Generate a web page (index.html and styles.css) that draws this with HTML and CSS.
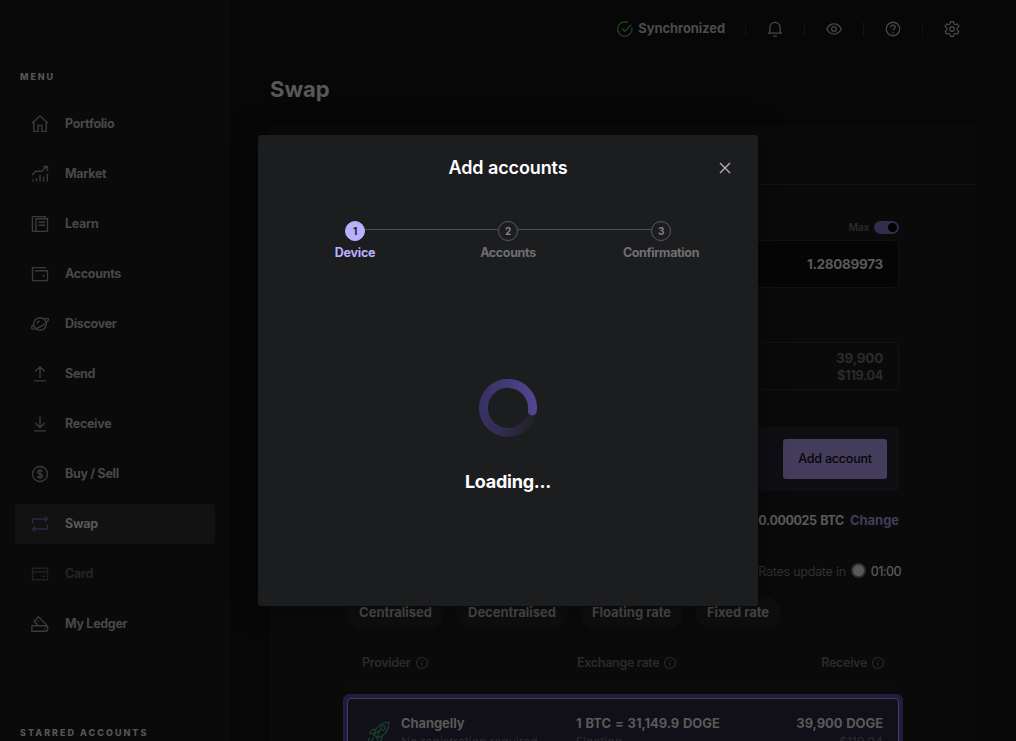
FILE: index.html
```html
<!DOCTYPE html>
<html lang="en">
<head>
<meta charset="utf-8">
<title>Swap – Add accounts</title>
<link rel="stylesheet" href="styles.css">
</head>
<body>
<div class="app">
  <aside class="sidebar">
    <h2 class="side-title">MENU</h2>
    <nav class="menu">
      <a class="item"><svg class="ico" viewBox="0 0 20 20"><path d="M2 9.3 10 2l8 7.3M3.8 8v9.4h4.3v-6h3.8v6h4.3V8"/></svg><span>Portfolio</span></a>
      <a class="item"><svg class="ico" viewBox="0 0 20 20"><path d="M2 11 5.800 7.200h5.600L17 2.500M13 2.500h4.500V7M2.800 15.500v2M6.500 14v3.500M10 11v6.500M13.600 12.600v4.900M17.300 10v7.500"/></svg><span>Market</span></a>
      <a class="item"><svg class="ico" viewBox="0 0 20 20"><path d="M5.500 17.400H3.600a1.200 1.200 0 0 1-1.200-1.200V2.600h12.800v2M6 17.400V4.800h11.500v11.400a1.200 1.200 0 0 1-1.200 1.200H5.500M8.500 8.300h6.500M8.500 11.300h6.500"/></svg><span>Learn</span></a>
      <a class="item"><svg class="ico" viewBox="0 0 20 20"><path d="M16 3.600H2.500v13h15V6.800H5M13.600 10.700v2M12.600 11.700h2"/></svg><span>Accounts</span></a>
      <a class="item"><svg class="ico" viewBox="0 0 20 20"><circle cx="10" cy="10" r="6.300"/><path d="M14.400 4.900c2-.7 3.500-.8 4 0 .8 1.400-2.400 4.600-7 7.200s-8.900 3.700-9.700 2.300c-.5-.8.300-2.200 1.900-3.800M7 9.500c.3-1.300 1.200-2.200 2.500-2.500"/></svg><span>Discover</span></a>
      <a class="item"><svg class="ico" viewBox="0 0 20 20"><path d="M10 14V3M5.300 7.600 10 3l4.700 4.600M4 16.900h12"/></svg><span>Send</span></a>
      <a class="item"><svg class="ico" viewBox="0 0 20 20"><path d="M10 2.500v11M5.300 8.900 10 13.500l4.700-4.600M4 16.900h12"/></svg><span>Receive</span></a>
      <a class="item"><svg class="ico" viewBox="0 0 20 20"><circle cx="10" cy="10" r="7.500"/><path d="M12.500 8c-.2-1-1.100-1.600-2.500-1.600S7.600 7 7.600 8.100c0 2.500 4.900 1.200 4.900 3.800 0 1.100-1 1.700-2.500 1.700s-2.500-.7-2.600-1.700M10 5v10"/></svg><span>Buy / Sell</span></a>
      <a class="item active"><svg class="ico" viewBox="0 0 20 20"><path d="M2.600 9.800V5h14.600M14.600 2.300 17.400 5l-2.800 2.700M17.400 10.200V15H2.800M5.400 12.300 2.600 15l2.800 2.700"/></svg><span>Swap</span></a>
      <a class="item off"><svg class="ico" viewBox="0 0 20 20"><path d="M2.500 4.300h15v11.500h-15zM2.500 8h15M12 12.300h3"/></svg><span>Card</span></a>
      <a class="item"><svg class="ico" viewBox="0 0 20 20"><path d="M1.900 11.700h13.200a2.800 2.800 0 0 1 0 5.600H1.900zM8.200 11.700 4.200 7.200l4.300-4.500 9 9.400M8.300 6.600v.9M14.800 14.100v.9"/></svg><span>My Ledger</span></a>
    </nav>
    <h2 class="side-title starred">STARRED ACCOUNTS</h2>
  </aside>

  <main class="main">
    <header class="topbar">
      <div class="sync"><svg class="ico" viewBox="0 0 20 20"><path d="M17.600 8.500A8 8 0 1 1 13.300 2.900M6.700 9.400l3.200 3 7-7.300"/></svg><span>Synchronized</span></div>
      <span class="cell"><svg class="ico" viewBox="0 0 20 20"><path d="M2 14.500h16M4.300 14.500V8.300a5.700 5.700 0 0 1 11.400 0v6.200M8 17.900h4"/></svg></span>
      <span class="cell"><svg class="ico" viewBox="0 0 20 20"><path d="M1.800 10C3.700 6.400 6.600 4.300 10 4.300s6.300 2.100 8.200 5.700c-1.900 3.600-4.800 5.700-8.200 5.700S3.700 13.600 1.800 10z"/><circle cx="10" cy="10" r="2.600"/></svg></span>
      <span class="cell"><svg class="ico" viewBox="0 0 20 20"><circle cx="10" cy="10" r="7.500"/><path d="M7.500 8c.1-1.400 1.100-2.200 2.500-2.200s2.500.8 2.500 2.100c0 1.700-2.500 1.800-2.500 3.800M10 13.300v1.600"/></svg></span>
      <span class="cell"><svg class="ico" viewBox="0 0 20 20"><path d="M8.400 1.900h3.200l.5 2.400 1.600.9 2.300-.8 1.600 2.800-1.800 1.700v2.200l1.800 1.700-1.600 2.800-2.300-.8-1.600.9-.5 2.400H8.400l-.5-2.400-1.600-.9-2.300.8-1.600-2.800 1.800-1.700V8.900L2.400 7.200 4 4.400l2.300.8 1.600-.9z"/><circle cx="10" cy="10" r="2.500"/></svg></span>
    </header>

    <h1 class="page-title">Swap</h1>

    <section class="card">
      <div class="card-head"></div>
      <div class="form">
        <div class="max-row">Max<span class="toggle"></span></div>
        <div class="field from">1.28089973</div>
        <div class="field to"><span>39,900</span><small>$119.04</small></div>
        <div class="banner"><button class="add">Add account</button></div>
        <div class="fee">0.000025 BTC<a class="change">Change</a></div>
        <div class="rates"><span>Rates update in</span><i class="timer"></i><b>01:00</b></div>
        <div class="pills">
          <span class="pill p1">Centralised</span><span class="pill p2">Decentralised</span><span class="pill p3">Floating rate</span><span class="pill p4">Fixed rate</span>
        </div>
        <div class="grid thead">
          <span>Provider<svg class="info" viewBox="0 0 14 14"><circle cx="7" cy="7" r="5.500"/><path d="M7 6.200v3.600M7 3.900v1.200"/></svg></span>
          <span>Exchange rate<svg class="info" viewBox="0 0 14 14"><circle cx="7" cy="7" r="5.500"/><path d="M7 6.200v3.600M7 3.900v1.200"/></svg></span>
          <span class="end">Receive<svg class="info" viewBox="0 0 14 14"><circle cx="7" cy="7" r="5.500"/><path d="M7 6.200v3.600M7 3.900v1.200"/></svg></span>
        </div>
        <div class="quote">
          <div class="grid quote-in">
            <div class="provider">
              <svg class="rocket" viewBox="0 0 24 24"><path d="M22 2c-6 .3-10.500 2.500-13.500 8l-2 4.500 4 3.500 4.500-2.200C20.500 12.500 22 8 22 2zM9 9.500c-3-.5-5 .5-6.500 4l4 .5M15 16c.5 3-.5 5-4 7l-.5-5M3 18c-1.500 1-2 3-2 5M7 17l-4 6M7 14l6-4-3 7"/><circle cx="16" cy="7.800" r="2.300"/></svg>
              <div><strong>Changelly</strong><em>No registration required</em></div>
            </div>
            <div><strong>1 BTC = 31,149.9 DOGE</strong><em>Floating</em></div>
            <div class="end"><strong>39,900 DOGE</strong><em>$119.04</em></div>
          </div>
        </div>
      </div>
    </section>
  </main>
</div>

<div class="modal" role="dialog">
  <header class="modal-head"><h3>Add accounts</h3>
    <svg class="close" viewBox="0 0 12 12"><path d="M1 1l10 10M11 1 1 11"/></svg>
  </header>
  <ol class="steps">
    <li class="step on"><span class="num">1</span><span class="label">Device</span></li>
    <li class="step"><span class="num">2</span><span class="label">Accounts</span></li>
    <li class="step"><span class="num">3</span><span class="label">Confirmation</span></li>
  </ol>
  <div class="loading">
    <svg class="spinner" viewBox="0 0 58 58">
      <defs>
        <linearGradient id="top" gradientUnits="userSpaceOnUse" x1="4" y1="0" x2="54" y2="0"><stop offset="0" stop-color="#383163"/><stop offset="1" stop-color="#50458f"/></linearGradient>
        <linearGradient id="low" gradientUnits="userSpaceOnUse" x1="4" y1="29" x2="52" y2="42"><stop offset="0" stop-color="#383163"/><stop offset=".5" stop-color="#312c50"/><stop offset="1" stop-color="#222229"/></linearGradient>
      </defs>
      <path stroke="url(#low)" d="M4.500 29A24.500 24.500 0 0 0 50.300 41"/>
      <path stroke="url(#top)" d="M4.500 29A24.500 24.500 0 1 1 53.300 32"/>
    </svg>
    <p>Loading...</p>
  </div>
</div>
</body>
</html>
```
FILE: styles.css
```css
* { box-sizing: border-box; }
body {
  margin: 0;
  width: 1016px;
  height: 741px;
  overflow: hidden;
  position: relative;
  background: #070707;
  color: #595959;
  font: 600 13px/16px Inter, "Liberation Sans", sans-serif;
  white-space: nowrap;
}
h1, h2, h3, p, ol { margin: 0; padding: 0; }
svg { fill: none; stroke: currentColor; flex: none; }

.app { display: flex; height: 741px; overflow: hidden; }

/* Sidebar */
.sidebar { width: 230px; flex: none; background: #0a0a0a; padding: 71px 15px 0; }
.side-title {
  padding-left: 5px;
  font-size: 9px;
  line-height: 12px;
  font-weight: 800;
  letter-spacing: 1.9px;
  color: #555;
}
.starred { margin-top: 83px; letter-spacing: 2px; }
.menu { display: grid; gap: 10px; margin-top: 21px; }
.item {
  display: flex;
  align-items: center;
  gap: 15px;
  height: 40px;
  padding-left: 15px;
  border-radius: 4px;
  color: #484848;
  font-size: 12.500px;
  font-weight: 700;
  letter-spacing: -.3px;
}
.item span { padding-bottom: 1px; }
.ico { width: 20px; height: 20px; stroke-width: 1.4; }
.item .ico { color: #3a3a3a; }
.item.active { background: #121212; color: #595959; }
.item.active .ico { color: #2d2843; }
.item.off { color: #252525; }
.item.off .ico { color: #202020; }

/* Main column */
.main { flex: 1; min-width: 0; padding: 0 40px; }
.topbar { display: flex; justify-content: flex-end; align-items: center; height: 58px; margin-right: -5px; }
.sync { display: flex; align-items: center; gap: 4px; margin-right: 20px; color: #4b4b4b; font-weight: 700; letter-spacing: -.1px; }
.sync span { padding-bottom: 2px; }
.sync .ico { width: 18px; height: 18px; color: #23461f; }
.cell {
  display: flex;
  align-items: center;
  justify-content: center;
  width: 59px;
  height: 14px;
  border-left: 1px solid #121212;
  color: #484848;
}
.cell .ico { width: 18px; height: 18px; }
.page-title { margin-top: 17px; font-size: 22px; line-height: 28px; color: #585858; }

.card { width: 706px; height: 640px; margin-top: 23px; background: #0a0a0a; border-radius: 4px; }
.card-head { height: 59px; border-bottom: 1px solid #131313; }
.form { width: 552px; margin-left: 77px; }
.max-row {
  display: flex;
  justify-content: flex-end;
  align-items: flex-end;
  gap: 5px;
  height: 55px;
  padding-bottom: 6px;
  font-size: 10.500px;
  letter-spacing: -.4px;
  line-height: 13px;
  color: #2a2a2a;
}
.toggle { width: 25px; height: 13px; padding: 2px; border-radius: 7px; background: #322c4d; }
.toggle::after { content: ""; display: block; width: 9px; height: 9px; margin-left: 12px; border-radius: 50%; background: #000; }
.field {
  display: flex;
  flex-direction: column;
  justify-content: center;
  align-items: flex-end;
  height: 48px;
  padding-right: 15px;
  border: 1px solid #121212;
  border-radius: 4px;
}
.from { background: #050505; font-size: 13.500px; font-weight: 700; letter-spacing: -.3px; }
.to { margin-top: 54px; font-size: 13.500px; font-weight: 700; letter-spacing: -.25px; line-height: 18px; color: #2b2b2b; }
.to small { font-size: 12.500px; line-height: 17px; }
.banner {
  display: flex;
  justify-content: flex-end;
  align-items: center;
  height: 64px;
  margin-top: 37px;
  padding-right: 12px;
  border-radius: 4px;
  background: #0f0e13;
}
.add {
  width: 104px;
  height: 40px;
  padding: 0;
  border: 0;
  border-radius: 3px;
  background: #433c5a;
  color: #060606;
  font: 500 12.500px/16px Inter, sans-serif;
  letter-spacing: -.2px;
}
.fee { display: flex; justify-content: flex-end; align-items: center; gap: 6px; height: 59px; font-size: 12.500px; font-weight: 700; letter-spacing: -.37px; word-spacing: 1px; }
.change { padding-bottom: 1px; color: #423c5c; font-size: 13px; letter-spacing: -.05px; }
.rates {
  display: flex;
  justify-content: flex-end;
  align-items: center;
  gap: 5px;
  height: 43px;
  margin-right: -2px;
  font-size: 12.500px;
  font-weight: 400;
  letter-spacing: -.25px;
  color: #303030;
}
.rates b { font-weight: 500; letter-spacing: -.6px; color: #595959; }
.timer { width: 15px; height: 15px; margin-top: -2px; border: 2px solid #303032; border-radius: 50%; background: #595959; }
.pills { display: flex; gap: 12px; margin-top: 4px; color: #484848; font-weight: 700; letter-spacing: -.03px; }
.pill { height: 32px; border-radius: 16px; background: #0e0e0e; line-height: 31px; text-align: center; }
.p1 { width: 97px; }
.p2 { width: 112px; }
.p3 { width: 103px; }
.p4 { width: 86px; }
.grid { display: grid; grid-template-columns: 215px 170px 1fr; }
.thead {
  height: 54px;
  padding: 20px 14px 0 15px;
  align-items: start;
  border-bottom: 1px solid #0e0e0e;
  font-size: 12.500px;
  font-weight: 600;
  letter-spacing: -.3px;
  color: #2a2a2a;
}
.thead span { display: flex; height: 28px; align-items: center; gap: 4px; }
.thead .end { justify-content: flex-end; }
.info { width: 14px; height: 14px; stroke-width: 1.100; }
.end { text-align: right; }
.quote { height: 90px; margin: 11px -4px 0; padding: 4px; border-radius: 6px; background: #211c3d; }
.quote-in {
  grid-template-columns: 214px 170px 1fr;
  height: 90px;
  padding: 15px 15px 0 14px;
  border: 1px solid #433d5c;
  border-radius: 4px;
  background: #110f17;
}
.quote strong, .quote em { display: block; line-height: 18px; }
.quote strong { font-weight: 700; letter-spacing: -.1px; word-spacing: 1px; color: #595959; }
.quote em { padding-top: 1px; font-size: 12px; font-style: normal; font-weight: 400; letter-spacing: .1px; color: #2c2b2e; }
.provider { display: flex; gap: 9px; }
.rocket { width: 24px; height: 24px; margin: 6px 0 0 5px; color: #17462f; stroke-width: 1.100; }
.provider .rocket { margin-right: 1px; }

/* Dialog over the page */
.modal {
  position: absolute;
  left: 258px;
  top: 135px;
  width: 500px;
  height: 471px;
  border-radius: 3px;
  background: #1c1d1f;
  box-shadow: 0 0 30px rgba(0, 0, 0, .35);
}
.modal-head { display: flex; align-items: center; justify-content: flex-end; height: 66px; padding: 0 27px; }
.modal-head h3 { flex: 1; padding-left: 12px; text-align: center; font-size: 18px; line-height: 24px; font-weight: 600; letter-spacing: -.1px; color: #fff; }
.close { width: 12px; height: 12px; color: #b5b5b6; stroke-width: 1.300; }
.steps { display: flex; justify-content: center; margin-top: 20px; list-style: none; }
.step {
  display: grid;
  grid-template: 20px 16px / 1fr 20px 1fr;
  row-gap: 4px;
  width: 153px;
  color: #6f6f71;
  font-size: 12.500px;
  letter-spacing: -.35px;
  font-weight: 650;
}
.num {
  grid-area: 1 / 2;
  border: 1px solid #5a5a5c;
  border-radius: 50%;
  text-align: center;
  font-size: 10px;
  font-weight: 700;
  line-height: 18px;
  color: #838385;
}
.label { grid-area: 2 / 1 / 3 / 4; text-align: center; }
.step::before, .step::after { content: ""; height: 1px; margin-top: 8px; background: #4c4d4f; }
.step::before { grid-area: 1 / 1; }
.step::after { grid-area: 1 / 3; }
.step:first-child::before, .step:last-child::after { background: none; }
.step.on { color: #bbb0ff; letter-spacing: -.2px; }
.step.on .num { border-color: #bbb0ff; background: #bbb0ff; color: #1c1d1f; }
.loading { display: flex; flex-direction: column; align-items: center; margin-top: 118px; }
.spinner { width: 58px; height: 58px; stroke-width: 9; stroke-linecap: round; }
.loading p { margin-top: 33px; font-size: 18px; line-height: 24px; letter-spacing: -.25px; font-weight: 650; color: #fff; }
```
